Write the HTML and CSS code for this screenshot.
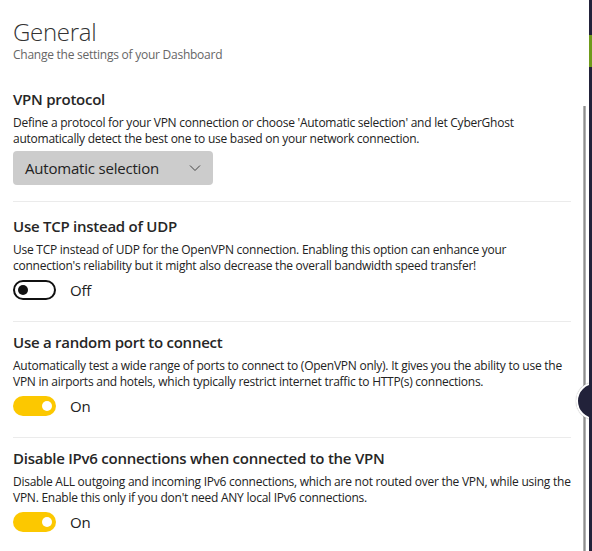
FILE: index.html
```html
<!DOCTYPE html>
<html>
<head>
<meta charset="utf-8">
<link rel="stylesheet" href="styles.css">
</head>
<body>
<div class="app">
  <div class="pane">
    <header class="head">
      <h1 class="title">General</h1>
      <p class="subtitle">Change the settings of your Dashboard</p>
    </header>

    <section class="setting first">
      <h2 class="name">VPN protocol</h2>
      <p class="desc">Define a protocol for your VPN connection or choose 'Automatic selection' and let CyberGhost automatically detect the best one to use based on your network connection.</p>
      <div class="select">
        <span>Automatic selection</span>
        <svg class="chev" width="12" height="8" viewBox="0 0 12 8"><path d="M1 1.5 L6 6.5 L11 1.5" fill="none" stroke="#444" stroke-width="1"/></svg>
      </div>
    </section>

    <section class="setting">
      <h2 class="name">Use TCP instead of UDP</h2>
      <p class="desc">Use TCP instead of UDP for the OpenVPN connection. Enabling this option can enhance your connection's reliability but it might also decrease the overall bandwidth speed transfer!</p>
      <div class="toggle-row">
        <span class="toggle off"><span class="knob"></span></span>
        <span class="state">Off</span>
      </div>
    </section>

    <section class="setting">
      <h2 class="name">Use a random port to connect</h2>
      <p class="desc">Automatically test a wide range of ports to connect to (OpenVPN only). It gives you the ability to use the VPN in airports and hotels, which typically restrict internet traffic to HTTP(s) connections.</p>
      <div class="toggle-row">
        <span class="toggle on"><span class="knob"></span></span>
        <span class="state">On</span>
      </div>
    </section>

    <section class="setting last">
      <h2 class="name">Disable IPv6 connections when connected to the VPN</h2>
      <p class="desc">Disable ALL outgoing and incoming IPv6 connections, which are not routed over the VPN, while using the VPN. Enable this only if you don't need ANY local IPv6 connections.</p>
      <div class="toggle-row">
        <span class="toggle on"><span class="knob"></span></span>
        <span class="state">On</span>
      </div>
    </section>

    <div class="scrollbar"></div>
    <div class="fab">
      <svg width="10" height="14" viewBox="0 0 10 14"><path d="M3 2 L8 7 L3 12" fill="none" stroke="#fff" stroke-width="1.6"/></svg>
    </div>
  </div>
  <div class="strip"><div class="strip-accent"></div></div>
</div>
</body>
</html>
```

FILE: styles.css
```css
html, body {
  margin: 0;
  padding: 0;
  background: #fff;
}
body {
  font-family: "Open Sans", "Noto Sans", sans-serif;
  color: #222;
  width: 592px;
  height: 551px;
  overflow: hidden;
}
.app {
  display: flex;
  height: 551px;
}
.pane {
  position: relative;
  flex: 1;
  padding: 0 18px 0 13px;
  overflow: hidden;
}
.head {
  padding-top: 17px;
  margin-bottom: 26px;
}
.title {
  margin: 0;
  font-size: 24px;
  font-weight: 300;
  line-height: 30px;
  color: #333;
  letter-spacing: -0.3px;
}
.subtitle {
  margin: 0;
  font-size: 12px;
  line-height: 16px;
  color: #666;
  letter-spacing: -0.25px;
}
.setting {
  border-bottom: 1px solid #ebebeb;
  padding-bottom: 21px;
  margin-bottom: 10px;
}
.setting.first {
  padding-bottom: 16px;
  margin-bottom: 14px;
}
.setting.last {
  border-bottom: none;
}
.name {
  margin: 0;
  font-size: 15px;
  font-weight: 600;
  line-height: 20px;
  color: #262626;
  letter-spacing: -0.25px;
}
.desc {
  margin: 6px 0 0;
  font-size: 12px;
  line-height: 16px;
  color: #222;
  letter-spacing: -0.25px;
}
.select {
  margin-top: 4px;
  width: 200px;
  height: 34px;
  box-sizing: border-box;
  background: #cccccc;
  border-radius: 4px;
  display: flex;
  align-items: center;
  justify-content: space-between;
  padding: 0 12px;
  font-size: 15px;
  color: #222;
  letter-spacing: -0.2px;
}
.toggle-row {
  margin-top: 6px;
  display: flex;
  align-items: center;
  gap: 14px;
  height: 20px;
}
.toggle {
  width: 43px;
  height: 20px;
  box-sizing: border-box;
  border-radius: 10px;
  display: flex;
  align-items: center;
  padding: 0 4px;
}
.toggle .knob {
  width: 10px;
  height: 10px;
  border-radius: 50%;
}
.toggle.off {
  border: 2px solid #111;
  background: #fff;
  padding: 0 3px;
}
.toggle.off .knob {
  background: #111;
}
.toggle.on {
  background: #fcc800;
  justify-content: flex-end;
}
.toggle.on .knob {
  background: #fff;
}
.state {
  font-size: 15px;
  color: #222;
  letter-spacing: -0.2px;
}
.scrollbar {
  position: absolute;
  right: 3px;
  top: 106px;
  bottom: 0;
  width: 3px;
  background: linear-gradient(to right, #c4c4c4, #8e8e8e, #c4c4c4);
}
.fab {
  position: absolute;
  left: 576px;
  top: 382px;
  width: 38px;
  height: 38px;
  border-radius: 50%;
  background: #22223a;
  border: 2px solid #fff;
  box-shadow: 0 0 1px #888;
  display: flex;
  align-items: center;
  padding-left: 10px;
  box-sizing: border-box;
}
.strip {
  width: 3px;
  background: #22223a;
  position: relative;
}
.strip-accent {
  margin-top: 35px;
  height: 32px;
  background: #6f9a1a;
}
```
